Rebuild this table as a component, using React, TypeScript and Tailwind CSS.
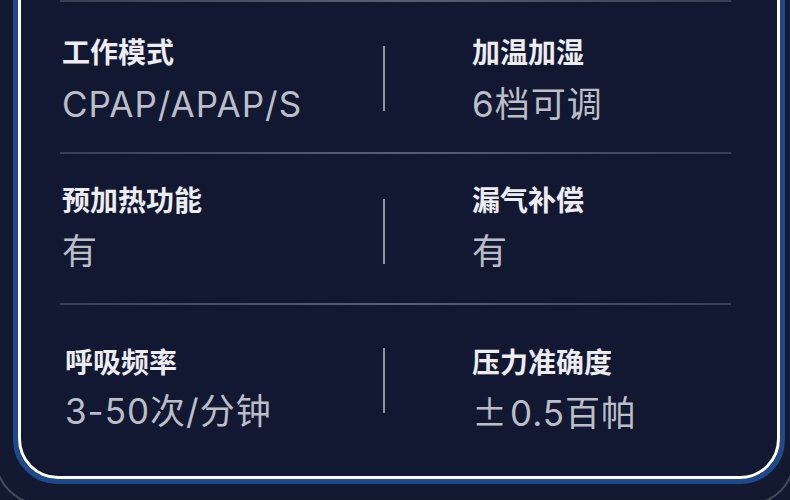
import React from "react";

type Spec = { label: string; value: React.ReactNode };

const rows: {
  left: Spec;
  right: Spec;
  pad: string;
  gap: string;
  bar: string;
  h: string;
  indent?: string;
}[] = [
  {
    left: { label: "工作模式", value: "CPAP/APAP/S" },
    right: { label: "加温加湿", value: "6档可调" },
    pad: "pt-[33px]",
    gap: "mt-[13px]",
    bar: "mt-[44px]",
    h: "h-[150px]",
  },
  {
    left: { label: "预加热功能", value: "有" },
    right: { label: "漏气补偿", value: "有" },
    pad: "pt-[29px]",
    gap: "mt-[12px]",
    bar: "mt-[45px]",
    h: "h-[149px]",
  },
  {
    left: { label: "呼吸频率", value: "3-50次/分钟" },
    right: {
      label: "压力准确度",
      value: (
        <>
          <span className="mr-[2px]" style={{ fontFamily: '"Noto Sans CJK SC", sans-serif' }}>
            ±
          </span>
          0.5百帕
        </>
      ),
    },
    pad: "pt-[40px]",
    gap: "mt-[10px]",
    bar: "mt-[43px]",
    h: "h-[171px]",
    indent: "pl-[3px]",
  },
];

function Divider() {
  return <div className="h-[2px] w-full bg-gradient-to-r from-[#3a4053] via-[#5a6073] to-[#3a4053]" />;
}

function Cell({ spec, pad, gap }: { spec: Spec; pad: string; gap: string }) {
  return (
    <div className={pad}>
      <div className="text-[28px] leading-[36px] font-bold text-[#ececf1]">{spec.label}</div>
      <div className={`${gap} text-[35px] leading-[40px] tracking-[1px] text-[#bbbec6]`}>
        {spec.value}
      </div>
    </div>
  );
}

export default function App() {
  return (
    <div
      className="w-[790px] h-[500px] overflow-hidden bg-[#131930]"
      style={{ fontFamily: 'Inter, "Noto Sans CJK SC", sans-serif' }}
    >
      <div className="-mt-[30px] mx-[-6px] rounded-b-[50px] border-2 border-t-0 border-[#474d5e] pb-[20px]">
        <div className="ml-[17px] mr-[9px] rounded-b-[44px] border-[5px] border-[#1c4a8c]">
          <div className="rounded-b-[40px] border-[3px] border-white bg-[#121831] pt-[22px] pl-[39px] pr-[46px]">
            <Divider />
            {rows.map((r, i) => (
              <div key={i}>
                <div className={`flex ${r.h}`}>
                  <div className="w-[323px] pl-[2px]">
                    <div className={r.indent}>
                      <Cell spec={r.left} pad={r.pad} gap={r.gap} />
                    </div>
                  </div>
                  <div className={`w-[2px] h-[65px] bg-[#8d93a3] ${r.bar}`} />
                  <div className="flex-1 pl-[87px]">
                    <Cell spec={r.right} pad={r.pad} gap={r.gap} />
                  </div>
                </div>
                {i < rows.length - 1 && <Divider />}
              </div>
            ))}
          </div>
        </div>
      </div>
    </div>
  );
}
